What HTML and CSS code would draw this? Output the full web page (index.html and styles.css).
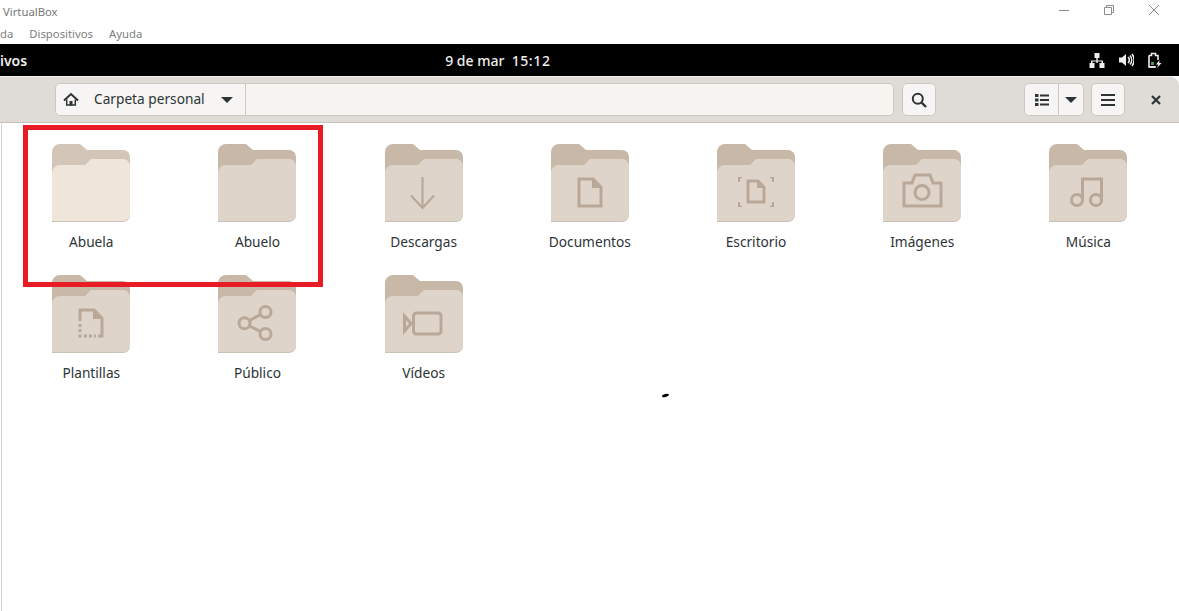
FILE: index.html
```html
<!DOCTYPE html>
<html lang="es">
<head>
  <meta charset="UTF-8" />
  <meta name="viewport" content="width=device-width, initial-scale=1.0"/>
  <title>Carpeta personal</title>
  <link rel="stylesheet" href="styles.css">
</head>
<body>
  <svg class="defs" width="0" height="0">
    <symbol id="folder" viewBox="0 0 78 78">
      <path class="f-back" d="M0 8a8 8 0 0 1 8-8H28l7 6H71a7 7 0 0 1 7 7V40H0Z"/>
      <path class="f-shadow" d="M0 29a8 8 0 0 1 8-8H33l6-6H71a7 7 0 0 1 7 7V71a7 7 0 0 1-7 7H0Z"/>
      <path class="f-front" d="M0 29a8 8 0 0 1 8-8H33l6-6H71a7 7 0 0 1 7 7V70a7 7 0 0 1-7 7H0Z"/>
    </symbol>
  </svg>

  <div class="vm-title">
    <span>VirtualBox</span>
    <div class="vm-controls">
      <svg width="12" height="12" viewBox="0 0 12 12"><path d="M1 6.500H11"/></svg>
      <svg width="12" height="12" viewBox="0 0 12 12"><path d="M1.500 3.500H8.500V10.500H1.500ZM3.500 3.500V1.500H10.500V8.500H8.500"/></svg>
      <svg width="12" height="12" viewBox="0 0 12 12"><path d="M1 1L11 11M11 1L1 11"/></svg>
    </div>
  </div>
  <div class="vm-menu">
    <span>da</span>
    <span>Dispositivos</span>
    <span>Ayuda</span>
  </div>

  <div class="topbar">
    <span class="activities">ivos</span>
    <span class="clock">9 de mar&nbsp; <span class="time">15:12</span></span>
    <div class="status">
      <svg width="16" height="16" viewBox="0 0 16 16"><path d="M5.500 1h5v5h-5zM7.300 6h1.400v2.400H14V11h-1.400V9.600H8.700V11H7.300V9.600H3.400V11H2V8.400h5.300zM0.500 11h5v5h-5zM10.500 11h5v5h-5z"/></svg>
      <svg width="16" height="16" viewBox="0 0 16 16"><path d="M1 5.500h3L8 2v12L4 10.500H1z"/><path class="wave" d="M10 5a4 4 0 0 1 0 6M12 3.500a7 7 0 0 1 0 9M14 2a9.500 9.500 0 0 1 0 12"/></svg>
      <svg width="16" height="16" viewBox="0 0 16 16"><path class="wave" d="M2 3.500h2.500V1.500h4v2H11V8M9 15H2z"/><path class="wave" d="M2 3.500V15H8"/><path class="charge" d="M4 10h3v3H4z"/><path d="M12.500 8L9 12.500h2.300L10 16l4.500-5h-2.300z"/></svg>
    </div>
  </div>

  <div class="window">
    <header class="headerbar">
      <div class="pathbar">
        <button class="path-btn">
          <svg class="home" width="16" height="16" viewBox="0 0 16 16">
            <path d="M1 8.500L8 2L15 8.500" fill="none" stroke="#2e3436" stroke-width="2"/>
            <path d="M3.700 7.500V13H12.300V7.500" fill="none" stroke="#2e3436" stroke-width="1.500"/>
            <path d="M6.500 9H9.500V13.500H6.500Z"/>
          </svg>
          <span>Carpeta personal</span>
          <i class="caret"></i>
        </button>
        <div class="path-entry"></div>
      </div>
      <button class="btn search-btn">
        <svg width="16" height="16" viewBox="0 0 16 16"><circle cx="6.800" cy="6.800" r="5" fill="none" stroke="#2e3436" stroke-width="2"/><path d="M10.500 10.500L15 15" stroke="#2e3436" stroke-width="2.400" fill="none"/></svg>
      </button>
      <div class="view-group">
        <button class="btn view-btn">
          <svg width="16" height="16" viewBox="0 0 16 16"><path d="M1 2h3.500v3H1zM1 6.500h3.500v3H1zM1 11h3.500v3H1zM6 2.500h9v2H6zM6 7h9v2H6zM6 11.500h9v2H6z"/></svg>
        </button>
        <button class="btn caret-btn"><i class="caret"></i></button>
      </div>
      <button class="btn menu-btn">
        <svg width="16" height="16" viewBox="0 0 16 16"><path d="M1 2h14v2H1zM1 7h14v2H1zM1 12h14v2H1z"/></svg>
      </button>
      <button class="close-btn">
        <svg width="10" height="10" viewBox="0 0 10 10"><path d="M1 1L9 9M9 1L1 9" fill="none" stroke="#2e3436" stroke-width="2.200"/></svg>
      </button>
    </header>

    <main class="files">
      <div class="item light">
        <svg class="folder" viewBox="0 0 78 78"><use href="#folder"/></svg>
        <span>Abuela</span>
      </div>
      <div class="item">
        <svg class="folder" viewBox="0 0 78 78"><use href="#folder"/></svg>
        <span>Abuelo</span>
      </div>
      <div class="item">
        <svg class="folder" viewBox="0 0 78 78"><use href="#folder"/><path class="glyph" d="M37.500 33V64M26 51.500L37.500 64L49 51.500"/></svg>
        <span>Descargas</span>
      </div>
      <div class="item">
        <svg class="folder" viewBox="0 0 78 78"><use href="#folder"/><path class="glyph thick" d="M28 35H42L50 43V62H28Z"/><path class="glyph-fill" d="M41 34L51 44H41Z"/></svg>
        <span>Documentos</span>
      </div>
      <div class="item">
        <svg class="folder" viewBox="0 0 78 78"><use href="#folder"/><path class="glyph thick" d="M31 37H41L47 43V58H31Z"/><path class="glyph-fill" d="M40 36L48 44H40ZM21 33h5l-3 2v3h-2zM57 33h-5l3 2v3h2zM21 63h5l-3-2v-3h-2zM57 63h-5l3-2v-3h2z"/></svg>
        <span>Escritorio</span>
      </div>
      <div class="item">
        <svg class="folder" viewBox="0 0 78 78"><use href="#folder"/><path class="glyph thick" d="M21 62V39H29L32 31H47L50 39H58V62Z"/><circle class="glyph thick" cx="39" cy="48.500" r="7"/></svg>
        <span>Imágenes</span>
      </div>
      <div class="item">
        <svg class="folder" viewBox="0 0 78 78"><use href="#folder"/><path class="glyph thick" d="M33.500 56V35H52.500V56"/><circle class="glyph thick" cx="28" cy="56" r="5.500"/><circle class="glyph thick" cx="47" cy="56" r="5.500"/></svg>
        <span>Música</span>
      </div>
      <div class="item">
        <svg class="folder" viewBox="0 0 78 78"><use href="#folder"/><path class="glyph thick" d="M28 46V35H42L50 43V61H46"/><path class="glyph-fill" d="M41 34L51 44H41ZM26.500 49h3v3h-3zM26.500 54h3v3h-3zM26.500 59.500h3v3h-3zM32 59.500h3v3h-3zM37 59.500h3v3h-3zM42 59.500h2v3h-2z"/></svg>
        <span>Plantillas</span>
      </div>
      <div class="item">
        <svg class="folder" viewBox="0 0 78 78"><use href="#folder"/><path class="glyph thick" d="M31.500 45.500L42.500 39.500M31.500 51L42.500 56.500"/><circle class="glyph thick" cx="47.500" cy="37" r="5.500"/><circle class="glyph thick" cx="26.500" cy="48.300" r="5.500"/><circle class="glyph thick" cx="47.500" cy="59" r="5.500"/></svg>
        <span>Público</span>
      </div>
      <div class="item">
        <svg class="folder" viewBox="0 0 78 78"><use href="#folder"/><rect class="glyph thick" x="28.500" y="38" width="27.500" height="21" rx="3"/><path class="glyph thick" d="M19.500 41V56L26 48.500Z"/></svg>
        <span>Vídeos</span>
      </div>
    </main>
  </div>

  <div class="highlight"></div>
  <div class="pointer"></div>
</body>
</html>
```

FILE: styles.css
```css
body {
  margin: 0;
  height: 611px;
  overflow: hidden;
  background-color: #fff;
  color: #2e3436;
  font-family: "Noto Sans", sans-serif;
  display: flex;
  flex-direction: column;
}
button {
  font-family: inherit;
  color: inherit;
  padding: 0;
}
.defs {
  position: absolute;
}

.vm-title {
  height: 23px;
  flex: none;
  display: flex;
  align-items: center;
  padding-left: 3px;
  font-size: 11.3px;
  color: #777;
}
.vm-controls {
  margin-left: auto;
  margin-right: 19px;
  margin-top: -3px;
  display: flex;
  gap: 33px;
}
.vm-controls path {
  fill: none;
  stroke: #8c8c8c;
  stroke-width: 1;
}
.vm-menu {
  height: 21px;
  flex: none;
  display: flex;
  align-items: center;
  gap: 16px;
  font-size: 11.3px;
  color: #808080;
}

.topbar {
  height: 32px;
  flex: none;
  background-color: #000;
  color: #eee;
  display: flex;
  align-items: center;
  font-size: 14px;
  font-weight: 500;
}
.activities {
  font-weight: 600;
}
.clock {
  margin-left: 418px;
}
.time {
  letter-spacing: 0.6px;
}
.status {
  margin-left: auto;
  margin-right: 16px;
  display: flex;
  gap: 13px;
}
.status svg {
  fill: #eee;
}
.status .wave {
  fill: none;
  stroke: #eee;
  stroke-width: 1.6;
}
.status .charge {
  fill: #4e9a4e;
}

.window {
  flex: 1;
  display: flex;
  flex-direction: column;
}
.headerbar {
  height: 47px;
  flex: none;
  box-sizing: border-box;
  background-color: #dfdcd8;
  border-top: 1px solid #f2f0ee;
  border-bottom: 1px solid #c6c2bc;
  border-top-right-radius: 9px;
  display: flex;
  align-items: center;
  padding-left: 55px;
}
.pathbar {
  width: 839px;
  height: 33px;
  display: flex;
}
.path-btn {
  width: 191px;
  box-sizing: border-box;
  background-color: #f6f5f4;
  border: 1px solid #cdc8c3;
  border-radius: 5px 0 0 5px;
  display: flex;
  align-items: center;
  padding-left: 7px;
  font-size: 13.7px;
}
.path-btn svg {
  fill: #2e3436;
}
.path-btn span {
  margin-left: 15px;
  margin-top: -2px;
}
.path-btn .caret {
  margin-left: 16px;
}
.caret {
  display: block;
  width: 0;
  height: 0;
  border-left: 6px solid transparent;
  border-right: 6px solid transparent;
  border-top: 6px solid #2e3436;
}
.path-entry {
  flex: 1;
  box-sizing: border-box;
  background-color: #f5f4f1;
  border: 1px solid #cdc8c3;
  border-left: none;
  border-radius: 0 5px 5px 0;
}
.btn {
  height: 33px;
  box-sizing: border-box;
  background-color: #f6f5f4;
  border: 1px solid #cdc8c3;
  border-radius: 5px;
  display: flex;
  align-items: center;
  justify-content: center;
}
.btn svg {
  fill: #2e3436;
}
.search-btn {
  width: 34px;
  margin-left: 8px;
}
.view-group {
  display: flex;
  margin-left: 88px;
}
.view-btn {
  width: 35px;
  border-radius: 5px 0 0 5px;
}
.caret-btn {
  width: 25px;
  border-left: none;
  border-radius: 0 5px 5px 0;
}
.menu-btn {
  width: 34px;
  margin-left: 7px;
}
.close-btn {
  width: 34px;
  height: 33px;
  margin-left: 14px;
  background: none;
  border: none;
}

.files {
  flex: 1;
  margin-left: 1px;
  border-left: 1px solid #d8d6d2;
  padding: 21px 0 0 6.2px;
  display: grid;
  grid-template-columns: repeat(7, 166.2px);
  grid-auto-rows: 131px;
}
.item {
  --back: #c8b8a8;
  --front: #ded4ca;
  display: flex;
  flex-direction: column;
  align-items: center;
  font-size: 13.7px;
}
.item span {
  margin-top: 10px;
  line-height: 19px;
}
.item.light {
  --back: #d3c5b7;
  --front: #efe5db;
}
.folder {
  width: 78px;
  height: 78px;
}
.f-back {
  fill: var(--back);
}
.f-front {
  fill: var(--front);
}
.f-shadow {
  fill: #cbc2b7;
}
.glyph {
  fill: none;
  stroke: #b9a898;
  stroke-width: 2.2;
}
.glyph.thick {
  stroke-width: 3;
}
.glyph-fill {
  fill: #b9a898;
}

.highlight {
  position: absolute;
  left: 23px;
  top: 125px;
  width: 290px;
  height: 152px;
  border: 5px solid #e81c24;
}
.pointer {
  position: absolute;
  left: 662px;
  top: 394px;
  width: 7px;
  height: 3px;
  background-color: #000;
  border-radius: 50%;
  transform: rotate(-15deg);
}
```
